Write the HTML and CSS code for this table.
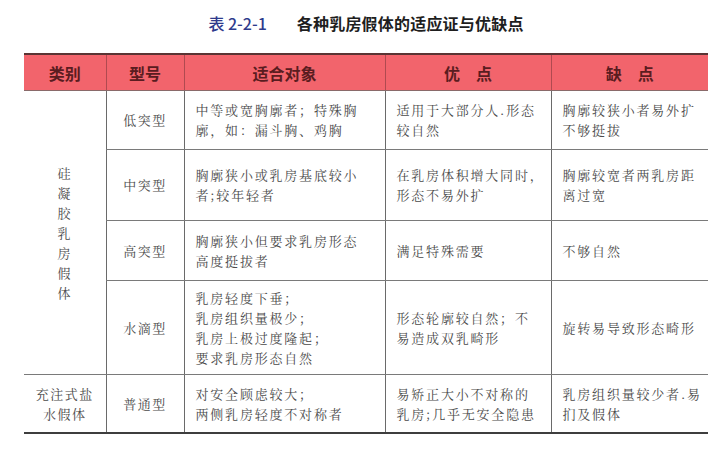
FILE: index.html
```html
<!DOCTYPE html>
<html lang="zh-CN">
<head>
<meta charset="utf-8">
<title>表 2-2-1 各种乳房假体的适应证与优缺点</title>
<link rel="stylesheet" href="styles.css">
</head>
<body>
<div class="wrap">
  <h1 class="title"><span class="num">表 2-2-1</span><span class="name">各种乳房假体的适应证与优缺点</span></h1>
  <table class="grid">
    <colgroup>
      <col class="c1"><col class="c2"><col class="c3"><col class="c4"><col class="c5">
    </colgroup>
    <thead>
      <tr class="head">
        <th>类别</th>
        <th>型号</th>
        <th>适合对象</th>
        <th>优　点</th>
        <th>缺　点</th>
      </tr>
    </thead>
    <tbody>
      <tr class="r1">
        <td class="cat" rowspan="4">硅<br>凝<br>胶<br>乳<br>房<br>假<br>体</td>
        <td class="type">低突型</td>
        <td>中等或宽胸廓者；特殊胸<br>廓，如：漏斗胸、鸡胸</td>
        <td>适用于大部分人.形态<br>较自然</td>
        <td>胸廓较狭小者易外扩<br>不够挺拔</td>
      </tr>
      <tr class="r2">
        <td class="type">中突型</td>
        <td>胸廓狭小或乳房基底较小<br>者;较年轻者</td>
        <td>在乳房体积增大同时，<br>形态不易外扩</td>
        <td>胸廓较宽者两乳房距<br>离过宽</td>
      </tr>
      <tr class="r3">
        <td class="type">高突型</td>
        <td>胸廓狭小但要求乳房形态<br>高度挺拔者</td>
        <td>满足特殊需要</td>
        <td>不够自然</td>
      </tr>
      <tr class="r4">
        <td class="type">水滴型</td>
        <td>乳房轻度下垂；<br>乳房组织量极少；<br>乳房上极过度隆起；<br>要求乳房形态自然</td>
        <td>形态轮廓较自然；不<br>易造成双乳畸形</td>
        <td>旋转易导致形态畸形</td>
      </tr>
      <tr class="r5">
        <td class="cat">充注式盐<br>水假体</td>
        <td class="type">普通型</td>
        <td>对安全顾虑较大；<br>两侧乳房轻度不对称者</td>
        <td>易矫正大小不对称的<br>乳房;几乎无安全隐患</td>
        <td>乳房组织量较少者.易<br>扪及假体</td>
      </tr>
    </tbody>
  </table>
</div>
</body>
</html>
```

FILE: styles.css
```css
html, body {
  margin: 0;
  padding: 0;
  background: #ffffff;
}

.wrap {
  width: 684px;
  margin-left: 24px;
  padding-top: 13px;
}

.title {
  margin: 0;
  height: 40px;
  line-height: 20px;
  text-align: center;
  font-family: "Noto Sans CJK SC", "Noto Sans", sans-serif;
  font-size: 16px;
  font-weight: 700;
  color: #1e1e1e;
}

.title .num {
  color: #2e3a8c;
  margin-right: 30px;
  font-weight: 500;
}

.title .name {
  letter-spacing: 0.2px;
}

.grid {
  width: 684px;
  table-layout: fixed;
  border-collapse: collapse;
  font-family: "Noto Serif CJK SC", "Noto Sans CJK SC", serif;
  font-size: 13px;
  color: #4a4a4a;
}

.c1 { width: 82px; }
.c2 { width: 78px; }
.c3 { width: 201px; }
.c4 { width: 166px; }
.c5 { width: 157px; }

.head th {
  height: 35px;
  padding: 0;
  background: #f2646c;
  border-top: 2px solid #5a3434;
  border-bottom: 1px solid #8a6a6a;
  border-left: 1px solid #b04a50;
  font-family: "Noto Sans CJK SC", "Noto Sans", sans-serif;
  font-size: 16px;
  font-weight: 700;
  color: #5a1c20;
  text-align: center;
  vertical-align: middle;
}

.head th:first-child {
  border-left: none;
}

.grid td {
  padding: 0 8px 0 11px;
  border-left: 1px solid #6a6a6a;
  border-bottom: 1px solid #7a7a7a;
  line-height: 20px;
  letter-spacing: 1.8px;
  vertical-align: middle;
  white-space: nowrap;
}

.grid td.cat {
  border-left: none;
  padding: 0;
  text-align: center;
  letter-spacing: 1.5px;
}

.grid td.type {
  padding: 0;
  text-align: center;
  letter-spacing: 1.5px;
}

.r1 td { height: 58px; }
.r2 td { height: 70px; }
.r3 td { height: 59px; }
.r4 td { height: 93px; }
.r5 td {
  height: 57px;
  border-bottom: 2px solid #3e3e3e;
}
```
